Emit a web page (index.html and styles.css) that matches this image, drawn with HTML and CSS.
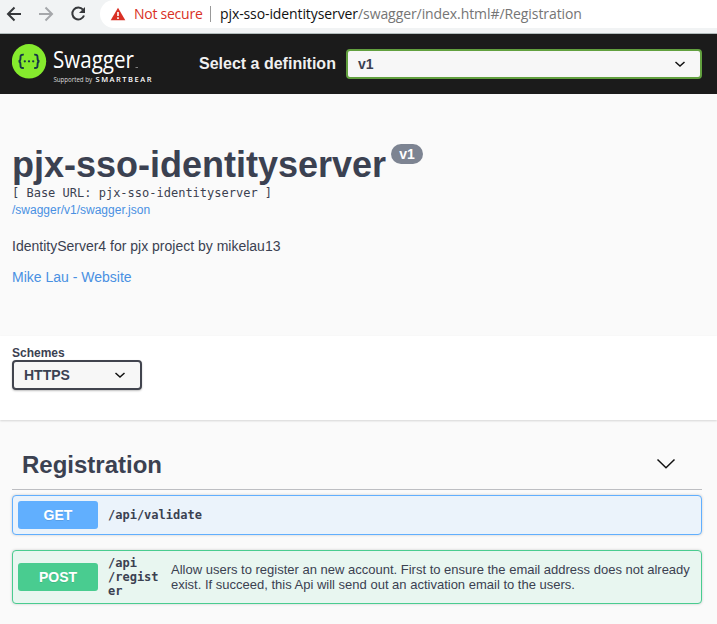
FILE: index.html
```html
<!DOCTYPE html>
<html lang="en">
<head>
<meta charset="utf-8">
<title>Swagger UI</title>
<link rel="stylesheet" href="styles.css">
</head>
<body>
<div class="browser">
  <svg class="nav" width="100" height="28" viewBox="0 0 100 28" fill="none" stroke-width="2">
    <path d="M21 14H8.5M14.5 7.5L8 14l6.5 6.5" stroke="#36383b"/>
    <path d="M39 14h12.5M45.500 7.500L52 14l-6.500 6.500" stroke="#a5a7aa"/>
    <path d="M83 9.700A6 6 0 1 0 84 15.500" stroke="#36383b"/>
    <path d="M85 7v6h-6z" fill="#36383b"/>
  </svg>
  <div class="address">
    <svg class="warning" width="16" height="14" viewBox="0 0 16 14"><path d="M8 .8L15.300 13.200H.7z" fill="#d93025"/><path d="M8 5v4M8 10.300v1.700" stroke="#fff" stroke-width="1.600"/></svg>
    <span class="insecure">Not secure</span>
    <span class="divider"></span>
    <span class="host">pjx-sso-identityserver</span><span class="path">/swagger/index.html#/Registration</span>
  </div>
</div>
<header class="topbar">
  <svg class="logo" width="144" height="48" viewBox="0 0 144 48">
    <circle cx="17" cy="21.300" r="17.200" fill="#85ea2d"/>
    <g fill="none" stroke="#173647" stroke-width="1.900">
      <path d="M11.800 14.600C8.200 14.400 8.500 15.900 8.500 17.700C8.500 20 8.400 21.300 6.500 21.300C8.400 21.300 8.500 22.600 8.500 24.900C8.500 26.900 8.200 28.200 11.800 28"/>
      <path d="M22.200 14.600C25.800 14.400 25.500 15.900 25.500 17.700C25.500 20 25.600 21.300 27.500 21.300C25.600 21.300 25.500 22.600 25.500 24.900C25.500 26.900 25.800 28.200 22.200 28"/>
    </g>
    <g fill="#173647"><circle cx="12.800" cy="21.300" r="1.150"/><circle cx="17" cy="21.300" r="1.150"/><circle cx="21.200" cy="21.300" r="1.150"/></g>
    <text class="word" x="41" y="28.300" textLength="81" lengthAdjust="spacingAndGlyphs">Swagger</text>
    <path d="M123.500 27.500h2.500" stroke="#999" stroke-width=".8"/>
    <text class="support" x="41.500" y="42" textLength="38.500">Supported by</text>
    <text class="smart" x="83.500" y="42" textLength="56">SMARTBEAR</text>
  </svg>
  <span class="label">Select a definition</span>
  <div class="select definition"><span>v1</span><svg class="chevron" width="12" height="8" viewBox="0 0 12 8"><path d="M1.500 2L6 6l4.500-4"/></svg></div>
</header>
<main>
  <section class="info">
    <h1>pjx-sso-identityserver<span class="version">v1</span></h1>
    <div class="base">[ Base URL: pjx-sso-identityserver ]</div>
    <a class="json">/swagger/v1/swagger.json</a>
    <p class="description">IdentityServer4 for pjx project by mikelau13</p>
    <a class="contact">Mike Lau - Website</a>
  </section>
  <section class="schemes">
    <span class="schemes-title">Schemes</span>
    <div class="select"><span>HTTPS</span><svg class="chevron" width="12" height="8" viewBox="0 0 12 8"><path d="M1.500 2L6 6l4.500-4"/></svg></div>
  </section>
  <section class="operations">
    <div class="tag"><h2>Registration</h2><svg class="expand" width="20" height="12" viewBox="0 0 20 12"><path d="M1.500 1.500L10 9.700l8.500-8.200"/></svg></div>
    <div class="operation get"><span class="method">GET</span><span class="route">/api/validate</span></div>
    <div class="operation post"><span class="method">POST</span><span class="route">/api<br>/regist<br>er</span><span class="summary">Allow users to register an new account. First to ensure the email address does not already exist. If succeed, this Api will send out an activation email to the users.</span></div>
  </section>
</main>
</body>
</html>
```
FILE: styles.css
```css
* { box-sizing: border-box; }
body { margin: 0; background: #fafafa; color: #3b4151; font-family: "Liberation Sans", sans-serif; height: 624px; overflow: hidden; }
h1, h2, p { margin: 0; }
svg { display: block; flex: none; }
.browser { height: 34px; display: flex; background: #f1f3f4; border-bottom: 1px solid #b2bcbc; }
.address { flex: 1; height: 28px; background: #fff; border-radius: 14px 0 0 14px; display: flex; align-items: center; padding-left: 10px; font: 14px/28px "Open Sans", sans-serif; white-space: nowrap; }
.warning { margin-right: 8px; }
.insecure { width: 68px; color: #d93025; letter-spacing: -.25px; }
.divider { width: 1px; height: 16px; background: #999; margin: 0 9px 0 8px; }
.host { width: 138px; color: #111; letter-spacing: -.1px; }
.path { color: #757575; letter-spacing: -.08px; }
.topbar { height: 60px; background: #1b1b1b; display: flex; align-items: center; padding: 0 15px 0 12px; }
.word { font: 24px "Open Sans", sans-serif; fill: #fff; }
.support { font: 6.200px "Open Sans", sans-serif; fill: #ddd; }
.smart { font: 600 7.500px "Open Sans", sans-serif; fill: #fff; }
.label { width: 137px; margin: 0 10px 0 43px; color: #f0f0f0; font-size: 16px; font-weight: 700; white-space: nowrap; }
.select { width: 130px; height: 30px; border: 2px solid #41444e; border-radius: 4px; background: #f7f7f7; box-shadow: 0 1px 2px rgba(0,0,0,.25); display: flex; align-items: center; justify-content: space-between; padding: 0 14px 0 10px; font-size: 14px; font-weight: 700; }
.definition { flex: 1; border-color: #62a03f; box-shadow: none; }
.chevron, .expand { fill: none; stroke: #111; stroke-width: 1.500; }
.expand { margin-bottom: 2px; }
.info { height: 242px; padding: 50px 12px 0; }
h1 { display: flex; align-items: flex-start; height: 41px; font-size: 36px; line-height: 41px; }
.version { height: 20px; margin: 0 0 0 5px; padding: 0 8px; border-radius: 10px; background: #7d8492; color: #fff; font-size: 14px; line-height: 20px; }
.base { height: 16px; font: 12px/16px "DejaVu Sans Mono", monospace; }
.json { display: block; height: 18px; font-size: 12px; line-height: 18px; color: #4990e2; }
.description { margin-top: 19px; font-size: 14px; line-height: 16px; }
.contact { display: block; margin-top: 15px; font-size: 14px; line-height: 16px; color: #4990e2; }
.schemes { height: 84px; padding: 10px 12px 0; background: #fff; box-shadow: 0 1px 2px rgba(0,0,0,.15); }
.schemes-title { display: block; height: 14px; font-size: 12px; font-weight: 700; line-height: 14px; }
.operations { padding: 21px 15px 0 12px; }
.tag { height: 49px; display: flex; align-items: center; justify-content: space-between; padding: 0 26px 0 10px; border-bottom: 1px solid #bdbec2; }
h2 { font-size: 24px; line-height: 28px; }
.operation { display: flex; align-items: center; height: 40px; margin: 5px 0 15px; padding: 5px; border: 1px solid #61affe; border-radius: 4px; background: #ebf3fb; box-shadow: 0 0 3px rgba(0,0,0,.19); }
.post { height: 54px; border-color: #49cc90; background: #e8f6f0; }
.method { width: 80px; height: 28px; flex: none; border-radius: 3px; background: #61affe; color: #fff; font-size: 14px; font-weight: 700; line-height: 28px; text-align: center; text-shadow: 0 1px 0 rgba(0,0,0,.1); }
.post .method { background: #49cc90; }
.route { flex: none; margin-left: 10px; font: 700 12px/14px "DejaVu Sans Mono", monospace; }
.post .route { width: 53px; }
.summary { margin-left: 10px; font-size: 13px; line-height: 15px; }
```
